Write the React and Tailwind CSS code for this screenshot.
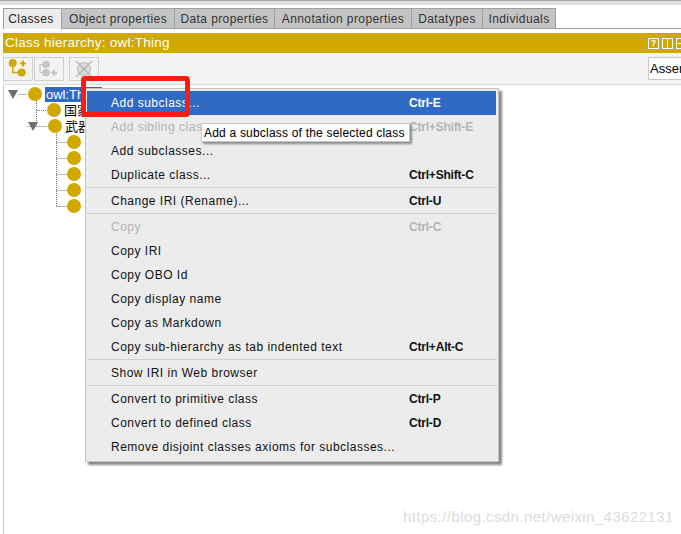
import React from "react";

const FONT = { fontFamily: '"Liberation Sans", Arial, sans-serif' };

const tabs = [
  ["Classes", "w-[59px] pr-[3px]"],
  ["Object properties", "w-[113px]"],
  ["Data properties", "w-[100px]"],
  ["Annotation properties", "w-[137px]"],
  ["Datatypes", "w-[71px]"],
  ["Individuals", "w-[73px]"],
];

const menu = [
  { label: "Add subclass...", key: "Ctrl-E", active: true },
  { label: "Add sibling class...", key: "Ctrl+Shift-E", disabled: true },
  { label: "Add subclasses..." },
  { label: "Duplicate class...", key: "Ctrl+Shift-C" },
  { sep: true },
  { label: "Change IRI (Rename)...", key: "Ctrl-U" },
  { sep: true },
  { label: "Copy", key: "Ctrl-C", disabled: true },
  { label: "Copy IRI" },
  { label: "Copy OBO Id" },
  { label: "Copy display name" },
  { label: "Copy as Markdown" },
  { label: "Copy sub-hierarchy as tab indented text", key: "Ctrl+Alt-C" },
  { sep: true },
  { label: "Show IRI in Web browser" },
  { sep: true },
  { label: "Convert to primitive class", key: "Ctrl-P" },
  { label: "Convert to defined class", key: "Ctrl-D" },
  { label: "Remove disjoint classes axioms for subclasses..." },
];

function Dot({ className = "" }) {
  return <span className={"block w-[14px] h-[14px] rounded-full bg-[#cfa800] shrink-0 " + className} />;
}

function Arrow() {
  return (
    <svg width="10" height="10" viewBox="0 0 10 10" className="shrink-0">
      <path d="M0 1h10L5 10z" fill="#6e6e6e" />
    </svg>
  );
}

function ToolButton({ className = "", children }) {
  return (
    <div className={"w-[30px] h-[24px] border border-[#d0d0d0] flex items-center justify-center " + className}>
      <svg width="24" height="22" viewBox="0 0 24 22">
        {children}
      </svg>
    </div>
  );
}

function TreeRow({ indent, arrow, children }) {
  return (
    <div className={"h-4 flex items-center " + indent}>
      {arrow && <span className="mr-[10px]"><Arrow /></span>}
      <Dot />
      {children}
    </div>
  );
}

function App() {
  return (
    <div className="relative w-[681px] h-[534px] overflow-hidden bg-white text-black" style={FONT}>
      <div className="h-[5px] bg-[#e0e0e0] border-t border-[#a8a8a8]" />
      <div className="ml-[3px] h-[529px] flex flex-col">
        {/* tabs */}
        <div className="h-[24px] pt-[3px] flex border-b border-[#a0a0a0] shrink-0">
          {tabs.map(([name, w], i) => (
            <div
              key={name}
              className={
                "h-[20px] flex items-center justify-center text-[12px] tracking-[0.4px] border border-b-0 border-[#a0a0a0] whitespace-nowrap " +
                w +
                (i === 0 ? " bg-[#ececec] text-[#222] h-[21px] -mb-px" : " bg-[#c4c4c4] text-[#333] border-l-0")
              }
            >
              {name}
            </div>
          ))}
        </div>
        <div className="h-[4px] shrink-0" />
        {/* gold header */}
        <div className="h-[20px] bg-[#cfa800] shrink-0 flex items-center justify-between pl-[2px]">
          <span className="text-white text-[13.5px] tracking-[0.25px]">Class hierarchy: owl:Thing</span>
          <div className="flex gap-[3px] items-center -mr-[6px]">
            <span className="w-[11px] h-[11px] border border-white text-white text-[9px] font-bold leading-[9px] text-center">?</span>
            <span className="w-[11px] h-[11px] border border-white flex justify-center">
              <span className="w-px h-full bg-white" />
            </span>
            <span className="w-[11px] h-[11px] border border-white flex items-center">
              <span className="w-full h-px bg-white" />
            </span>
          </div>
        </div>
        {/* toolbar */}
        <div className="h-[32px] bg-[#f3f3f3] border-b border-[#dcdcdc] shrink-0 flex items-center">
          <ToolButton>
            <circle cx="6.700" cy="5" r="4" fill="#cfa800" />
            <circle cx="15.700" cy="14.500" r="4" fill="#cfa800" />
            <path d="M6.700 8v6.500h6" fill="none" stroke="#cfa800" strokeWidth="1.500" />
            <path d="M14 5.500h6M17 2.500v6" stroke="#cfa800" strokeWidth="2" />
          </ToolButton>
          <ToolButton className="ml-px">
            <circle cx="9" cy="6.500" r="3.800" fill="#c4c4c4" />
            <circle cx="9" cy="14.700" r="3.800" fill="#c4c4c4" />
            <path d="M6 6.500H3v8h3" fill="none" stroke="#c4c4c4" strokeWidth="1.200" />
            <path d="M14 14.700h6M17 11.700v6" stroke="#c4c4c4" strokeWidth="2" />
          </ToolButton>
          <ToolButton className="ml-[5px]">
            <circle cx="12" cy="11" r="6.500" fill="#dcdcdc" stroke="#bdbdbd" strokeWidth="1.200" />
            <path d="M4 3l16 16M20 3L4 19" stroke="#b4b4b4" strokeWidth="1.400" />
          </ToolButton>
          <div className="ml-auto w-[33px] h-[23px] bg-white border border-[#c8c8c8] border-r-0 text-[13px] flex items-center pl-px overflow-hidden">
            Asser
          </div>
        </div>
        {/* tree */}
        <div className="relative flex-1 pt-[1px] text-[13px] leading-4 border-l border-[#c8c8c8]">
          <svg className="absolute left-[-1px] top-0" width="90" height="130" fill="none" stroke="#777" strokeDasharray="1 1">
            <path d="M15.500 9.500H24M33.500 16v9.500H44M33.500 25v16" />
            <path d="M33.500 41.500H24M33.500 41.500H44M53.500 48v74M53.500 57.500H64M53.500 73.500H64M53.500 89.500H64M53.500 105.500H64M53.500 121.500H64" />
          </svg>
          <div className="relative">
            <TreeRow indent="pl-[4px]" arrow>
              <span className="ml-[3px] h-[15px] w-[57px] bg-[#316ac5] text-white text-[13px] leading-[15px] pl-px overflow-hidden">owl:Thing</span>
            </TreeRow>
            <TreeRow indent="pl-[43px]">
              <span className="ml-[3px]" style={{ fontFamily: '"Noto Sans CJK SC", sans-serif' }}>国家</span>
            </TreeRow>
            <TreeRow indent="pl-[24px]" arrow>
              <span className="ml-[3px]" style={{ fontFamily: '"Noto Sans CJK SC", sans-serif' }}>武器</span>
            </TreeRow>
            <TreeRow indent="pl-[63px]" />
            <TreeRow indent="pl-[63px]" />
            <TreeRow indent="pl-[63px]" />
            <TreeRow indent="pl-[63px]" />
            <TreeRow indent="pl-[63px]" />
          </div>
        </div>
      </div>

      {/* context menu */}
      <div className="absolute left-[85px] top-[88px] w-[414px] h-[374px] bg-[#ececec] border border-[#c4c4c4] pt-[2px] px-px shadow-[3px_3px_2px_#8a8a8a] text-[12px] tracking-[0.5px]">
        {menu.map((item, i) =>
          item.sep ? (
            <div key={i} className="h-[2px] bg-[#cfcfcf] border-b border-[#ececec]" />
          ) : (
            <div
              key={i}
              className={
                "h-[24px] flex items-center pl-[24px] w-[409px] " +
                (item.active ? "bg-[#316ac5] text-white " : "") +
                (item.disabled ? "text-[#b4b4b4] " : "text-[#111] ")
              }
            >
              <span className="w-[298px] whitespace-nowrap">{item.label}</span>
              {item.key && <span className="font-bold tracking-[-0.2px]">{item.key}</span>}
            </div>
          )
        )}
      </div>

      {/* tooltip */}
      <div className="absolute left-[201px] top-[123px] h-[19px] w-[209px] bg-[#fdfdfd] border border-[#c8c8c8] shadow-[2px_2px_2px_#8a8a8a] text-[12px] tracking-[0.2px] flex items-center pl-[2px] whitespace-nowrap">
        Add a subclass of the selected class
      </div>

      {/* red highlight */}
      <div className="absolute left-[81px] top-[76px] w-[109px] h-[41px] border-[5px] border-[#fb1d14] rounded-[4px]" />

      {/* watermark */}
      <div className="absolute left-[403px] top-[506px] text-[15px] tracking-[0.42px] text-[#dcdcdc] whitespace-nowrap">
        https://blog.csdn.net/weixin_43622131
      </div>
    </div>
  );
}

export default App;
